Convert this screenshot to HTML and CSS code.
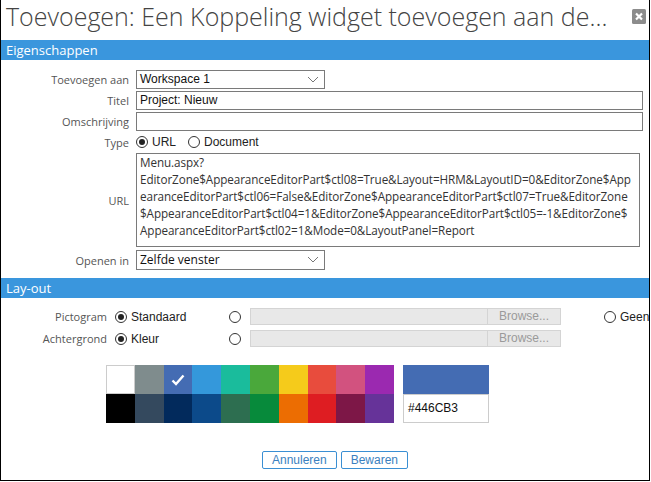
FILE: index.html
```html
<!DOCTYPE html>
<html lang="nl">
<head>
    <meta charset="UTF-8">
    <title>Koppeling widget toevoegen</title>
    <link rel="stylesheet" href="styles.css">
</head>
<body>
    <div class="dialog">
        <div class="dialog-title">
            <h1>Toevoegen: Een Koppeling widget toevoegen aan de...</h1>
            <span class="close-btn">
                <svg width="14" height="15" viewBox="0 0 14 15"><rect width="14" height="15" rx="1.5" fill="#8c8c8c"/><path d="M4 4.5 L10 10.5 M10 4.5 L4 10.5" stroke="#fff" stroke-width="2.2"/></svg>
            </span>
        </div>

        <div class="section-header">Eigenschappen</div>
        <div class="form-grid">
            <label>Toevoegen aan</label>
            <div class="select-wrap">
                <div class="fake-select arial">Workspace 1</div>
                <svg class="chevron" width="12" height="7" viewBox="0 0 12 7"><path d="M1 1 L6 6 L11 1" fill="none" stroke="#777" stroke-width="1"/></svg>
            </div>

            <label>Titel</label>
            <div class="text-input arial">Project: Nieuw</div>

            <label>Omschrijving</label>
            <div class="text-input"></div>

            <label>Type</label>
            <div class="radio-row">
                <span class="radio checked"></span><span class="arial">URL</span>
                <span class="radio spaced"></span><span class="arial">Document</span>
            </div>

            <label class="mid">URL</label>
            <div class="url-box">Menu.aspx?
EditorZone$AppearanceEditorPart$ctl08=True&amp;Layout=HRM&amp;LayoutID=0&amp;EditorZone$App
earanceEditorPart$ctl06=False&amp;EditorZone$AppearanceEditorPart$ctl07=True&amp;EditorZone
$AppearanceEditorPart$ctl04=1&amp;EditorZone$AppearanceEditorPart$ctl05=-1&amp;EditorZone$
AppearanceEditorPart$ctl02=1&amp;Mode=0&amp;LayoutPanel=Report</div>

            <label class="openen">Openen in</label>
            <div class="select-wrap openen">
                <div class="fake-select">Zelfde venster</div>
                <svg class="chevron" width="12" height="7" viewBox="0 0 12 7"><path d="M1 1 L6 6 L11 1" fill="none" stroke="#777" stroke-width="1"/></svg>
            </div>
        </div>

        <div class="section-header">Lay-out</div>
        <div class="layout-section">
            <div class="layout-row">
                <label>Pictogram</label>
                <div class="opt"><span class="radio checked"></span><span class="arial">Standaard</span></div>
                <div class="opt"><span class="radio"></span></div>
                <div class="file-input"></div>
                <div class="browse">Browse...</div>
                <div></div>
                <div class="opt"><span class="radio"></span><span class="arial">Geen</span></div>
            </div>
            <div class="layout-row">
                <label>Achtergrond</label>
                <div class="opt"><span class="radio checked"></span><span class="arial">Kleur</span></div>
                <div class="opt"><span class="radio"></span></div>
                <div class="file-input"></div>
                <div class="browse">Browse...</div>
            </div>

            <div class="color-picker">
                <div class="palette">
                    <span style="background:#ffffff"></span>
                    <span style="background:#7f8c8d"></span>
                    <span class="selected" style="background:#446cb3">
                        <svg width="14" height="12" viewBox="0 0 14 12"><path d="M1.5 6.5 L5 10 L12.5 1.5" fill="none" stroke="#fff" stroke-width="2.4"/></svg>
                    </span>
                    <span style="background:#3498db"></span>
                    <span style="background:#1abc9c"></span>
                    <span style="background:#4aa83b"></span>
                    <span style="background:#f5cb1b"></span>
                    <span style="background:#e84c3d"></span>
                    <span style="background:#d2527f"></span>
                    <span style="background:#9b29b0"></span>
                    <span style="background:#000000"></span>
                    <span style="background:#34495e"></span>
                    <span style="background:#022a5c"></span>
                    <span style="background:#0c4a8a"></span>
                    <span style="background:#2d6e50"></span>
                    <span style="background:#078a3b"></span>
                    <span style="background:#ec6d02"></span>
                    <span style="background:#de1d22"></span>
                    <span style="background:#7d1747"></span>
                    <span style="background:#663399"></span>
                </div>
                <div class="preview">
                    <div class="preview-swatch"></div>
                    <div class="preview-value arial">#446CB3</div>
                </div>
            </div>
        </div>

        <div class="actions">
            <button type="button">Annuleren</button>
            <button type="button">Bewaren</button>
        </div>
    </div>
</body>
</html>
```

FILE: styles.css
```css
:root {
    --header-color: #3a96dd;
    --label-color: #555;
    --input-border: #7a7a7a;
}

body {
    margin: 0;
    font-family: "Open Sans", sans-serif;
    background: white;
}

.arial {
    font-family: "Liberation Sans", Arial, sans-serif;
}

.dialog {
    width: 648px;
    height: 480px;
    border: 1px solid #000;
    border-top: none;
    display: flex;
    flex-direction: column;
}

.dialog-title {
    height: 40px;
    display: flex;
    justify-content: space-between;
    align-items: flex-start;
}

.dialog-title h1 {
    margin: 0;
    padding-left: 5px;
    min-width: 0;
    font-size: 25px;
    font-weight: 300;
    line-height: 33px;
    color: #444;
    white-space: nowrap;
}

.close-btn {
    margin: 9px 3px 0 0;
    line-height: 0;
    flex-shrink: 0;
}

.section-header {
    height: 20px;
    line-height: 20px;
    background: var(--header-color);
    color: white;
    font-size: 13px;
    padding-left: 5px;
}

.form-grid {
    display: grid;
    grid-template-columns: 128px 1fr;
    column-gap: 7px;
    row-gap: 2px;
    padding: 10px 6px 8px 0;
    align-items: center;
}

.form-grid label {
    text-align: right;
    font-size: 11px;
    color: var(--label-color);
}

.form-grid .openen {
    margin-top: 1px;
}

.select-wrap {
    position: relative;
    width: 189px;
}

.fake-select {
    height: 17px;
    line-height: 17px;
    border: 1px solid var(--input-border);
    padding-left: 3px;
    font-size: 12px;
    color: #111;
}

.select-wrap.openen .fake-select {
    height: 18px;
    line-height: 18px;
}

.chevron {
    position: absolute;
    right: 6px;
    top: 6px;
}

.text-input {
    height: 17px;
    line-height: 17px;
    border: 1px solid var(--input-border);
    padding-left: 3px;
    font-size: 12px;
    color: #111;
}

.radio-row {
    display: flex;
    align-items: center;
    height: 18px;
    font-size: 12px;
    color: #222;
}

.radio {
    width: 10px;
    height: 10px;
    border: 1px solid #333;
    border-radius: 50%;
    display: inline-flex;
    align-items: center;
    justify-content: center;
    margin-right: 4px;
    flex-shrink: 0;
}

.radio.checked::after {
    content: "";
    width: 6px;
    height: 6px;
    border-radius: 50%;
    background: #222;
}

.radio.spaced {
    margin-left: 12px;
}

.url-box {
    height: 91px;
    margin-right: 3px;
    border: 1px solid var(--input-border);
    padding: 0 3px 1px;
    font-size: 11.7px;
    letter-spacing: -0.08px;
    line-height: 17px;
    color: #333;
    white-space: pre;
    overflow: hidden;
}

.layout-section {
    padding-top: 10px;
}

.layout-row {
    display: grid;
    grid-template-columns: 106px 122px 21px 238px 73px 43px auto;
    align-items: center;
    height: 17px;
    margin-bottom: 5px;
    font-size: 12px;
    color: #222;
}

.layout-row label {
    text-align: right;
    font-size: 11px;
    color: var(--label-color);
}

.layout-row .opt {
    display: flex;
    align-items: center;
}

.layout-row .opt:nth-child(2) {
    padding-left: 8px;
}

.file-input {
    height: 15px;
    border: 1px solid #d4d4d4;
    background: #e8e8e8;
}

.browse {
    height: 15px;
    line-height: 15px;
    border: 1px solid #d4d4d4;
    border-left: none;
    background: #e8e8e8;
    color: #9a9a9a;
    font-family: "Liberation Sans", Arial, sans-serif;
    font-size: 12px;
    text-align: center;
}

.color-picker {
    display: flex;
    gap: 9px;
    margin: 18px 0 0 105px;
}

.palette {
    display: grid;
    grid-template-columns: repeat(10, 28.8px);
    grid-auto-rows: 29px;
}

.palette span {
    display: flex;
    align-items: center;
    justify-content: center;
}

.palette span:first-child {
    box-shadow: inset 0 0 0 1px #ccc;
}

.preview {
    width: 86px;
    display: flex;
    flex-direction: column;
}

.preview-swatch {
    height: 29px;
    background: #446cb3;
}

.preview-value {
    height: 27px;
    line-height: 27px;
    border: 1px solid #ccc;
    padding-left: 4px;
    font-size: 12px;
    color: #111;
}

.actions {
    display: flex;
    justify-content: center;
    gap: 4px;
    margin: 28px 0 0 20px;
}

.actions button {
    height: 18px;
    padding: 0 9px;
    border: 1px solid #3a8fd3;
    border-radius: 2px;
    background: white;
    color: #3a7fc0;
    font-family: "Liberation Sans", Arial, sans-serif;
    font-size: 12px;
    line-height: 16px;
}
```
